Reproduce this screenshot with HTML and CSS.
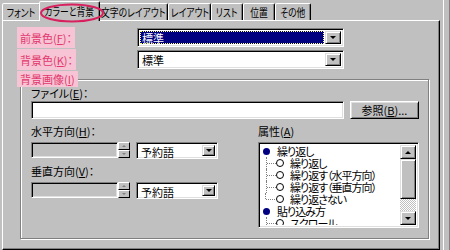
FILE: index.html
```html
<!DOCTYPE html>
<html>
<head>
<meta charset="utf-8">
<link rel="stylesheet" href="styles.css">
</head>
<body>
<div class="screen">
  <div class="dialog">
    <div class="tabs">
      <div class="tab t1"><span>フォント</span></div>
      <div class="tab sel t2"><span>カラーと背景</span></div>
      <div class="tab t3"><span>文字のレイアウト</span></div>
      <div class="tab t4"><span>レイアウト</span></div>
      <div class="tab t5"><span>リスト</span></div>
      <div class="tab t6"><span>位置</span></div>
      <div class="tab t7"><span>その他</span></div>
      <svg class="circle" width="70" height="22" viewBox="0 0 70 22"><ellipse cx="33" cy="11" rx="31" ry="8.5" fill="none" stroke="#d8205e" stroke-width="2"/></svg>
    </div>
    <div class="panel">
      <div class="crow">
        <div class="clbl"><span class="hl">前景色(<u>F</u>)：</span></div>
        <div class="combo wide"><span class="val focus">標準</span><span class="arrow"><i></i></span></div>
      </div>
      <div class="crow">
        <div class="clbl"><span class="hl">背景色(<u>K</u>)：</span></div>
        <div class="combo wide"><span class="val">標準</span><span class="arrow"><i></i></span></div>
      </div>
      <fieldset class="group">
        <legend class="hl">背景画像(<u>I</u>)</legend>
        <div class="lbl">ファイル(<u>E</u>)：</div>
        <div class="filerow">
          <div class="field file"></div>
          <div class="btn">参照(<u>B</u>)...</div>
        </div>
        <div class="lower">
          <div class="lcol">
            <div class="lbl">水平方向(<u>H</u>)：</div>
            <div class="spinrow">
              <div class="field spin"></div>
              <div class="spinbtn"><span class="up"><i></i></span><span class="dn"><i></i></span></div>
              <div class="combo small"><span class="val">予約語</span><span class="arrow"><i></i></span></div>
            </div>
            <div class="lbl second">垂直方向(<u>V</u>)：</div>
            <div class="spinrow">
              <div class="field spin"></div>
              <div class="spinbtn"><span class="up"><i></i></span><span class="dn"><i></i></span></div>
              <div class="combo small"><span class="val">予約語</span><span class="arrow"><i></i></span></div>
            </div>
          </div>
          <div class="rcol">
            <div class="lbl">属性(<u>A</u>)</div>
            <div class="listbox">
              <div class="items">
                <div class="item top"><span class="dot"></span>繰り返し</div>
                <div class="item child"><span class="tree"></span><span class="ring"></span>繰り返し</div>
                <div class="item child"><span class="tree"></span><span class="ring"></span>繰り返す（水平方向）</div>
                <div class="item child"><span class="tree"></span><span class="ring"></span>繰り返す（垂直方向）</div>
                <div class="item child last"><span class="tree"></span><span class="ring"></span>繰り返さない</div>
                <div class="item top"><span class="dot"></span>貼り込み方</div>
                <div class="item child"><span class="tree"></span><span class="ring"></span>スクロール</div>
              </div>
              <div class="sbar">
                <span class="sb-btn"><i class="tri-up"></i></span>
                <span class="thumb"></span>
                <span class="track"></span>
                <span class="sb-btn"><i class="tri-dn"></i></span>
              </div>
            </div>
          </div>
        </div>
      </fieldset>
    </div>
  </div>
  <div class="edge"></div>
</div>
</body>
</html>
```

FILE: styles.css
```css
* { box-sizing: border-box; }
html, body { margin: 0; padding: 0; }
body {
  background: #c0c0c0;
  font-family: "Noto Sans CJK JP", sans-serif;
  font-size: 11px;
  line-height: 12px;
  color: #000;
  font-feature-settings: "palt";
}
u { text-decoration: underline; text-underline-offset: 1px; }
.screen {
  width: 450px;
  height: 250px;
  overflow: hidden;
  display: flex;
  background: #c0c0c0;
}
.dialog {
  width: 440px;
  padding-left: 2px;
  display: flex;
  flex-direction: column;
}
.tabs {
  position: relative;
  height: 20px;
  display: flex;
  align-items: flex-end;
  z-index: 2;
}
.tab {
  height: 17px;
  border: 1px solid;
  border-bottom: none;
  border-color: #fff #000 transparent #fff;
  box-shadow: inset -1px 0 #808080;
  border-radius: 2px 2px 0 0;
  padding-top: 2px;
  display: flex;
  justify-content: center;
  white-space: nowrap;
  background: #c0c0c0;
}
.tab span {
  display: inline-block;
  transform: scaleX(0.8);
}
.t1 { width: 39px; }
.t2 { width: 61px; }
.t3 { width: 70px; }
.t4 { width: 43px; }
.t5 { width: 32px; }
.t6 { width: 32px; }
.t7 { width: 36px; }
.tab.sel {
  height: 20px;
  margin: 0 -2px -1px;
  padding-top: 3px;
  position: relative;
}
.circle {
  position: absolute;
  left: 37px;
  top: 2px;
}
.panel {
  flex: 1;
  border: 1px solid;
  border-color: #fff #000 #000 #fff;
  box-shadow: inset -1px -1px #808080;
  padding: 7px 0 0 14px;
}
.hl {
  background: #f6c4d4;
  color: #e2386e;
  padding: 3px 3px 2px;
}
.crow {
  display: flex;
  align-items: center;
  height: 19px;
}
.crow + .crow { margin-top: 3px; }
.clbl { width: 120px; }
.combo {
  display: flex;
  align-items: stretch;
  background: #fff;
  border: 1px solid;
  border-color: #808080 #fff #fff #808080;
  box-shadow: inset 1px 1px #000, inset -1px -1px #dfdfdf;
  padding: 2px;
}
.combo.wide { width: 207px; height: 19px; }
.combo.small { width: 82px; height: 17px; margin-left: 6px; }
.val {
  flex: 1;
  padding: 1px 2px 0;
  line-height: 12px;
}
.val.focus {
  background: #000080;
  color: #fff;
  outline: 1px dotted #ffff80;
  outline-offset: -1px;
  margin-right: 1px;
}
.arrow {
  width: 16px;
  border: 1px solid;
  border-color: #dfdfdf #000 #000 #dfdfdf;
  box-shadow: inset 1px 1px #fff, inset -1px -1px #808080;
  background: #c0c0c0;
  display: flex;
  align-items: center;
  justify-content: center;
}
.combo.small .arrow { width: 13px; }
.arrow i, .dn i, .tri-dn {
  width: 0; height: 0;
  border-left: 3px solid transparent;
  border-right: 3px solid transparent;
  border-top: 3px solid #000;
}
.group {
  margin: 2px 0 0 3px;
  width: 409px;
  height: 168px;
  border: 1px solid #808080;
  box-shadow: inset 1px 1px #fff, 1px 1px #fff;
  padding: 0 0 0 10px;
}
.group legend {
  margin-left: -14px;
  padding: 2px 3px;
  line-height: 12px;
}
.lbl { height: 13px; line-height: 12px; margin-top: 0; }
.filerow {
  display: flex;
  margin-top: 1px;
  height: 18px;
}
.field {
  border: 1px solid;
  border-color: #808080 #fff #fff #808080;
  box-shadow: inset 1px 1px #000, inset -1px -1px #dfdfdf;
}
.field.file { width: 313px; background: #fff; }
.btn {
  width: 69px;
  margin-left: 6px;
  border: 1px solid;
  border-color: #fff #000 #000 #fff;
  box-shadow: inset 1px 1px #dfdfdf, inset -1px -1px #808080;
  text-align: center;
  padding-top: 2px;
}
.lower { display: flex; margin-top: 6px; }
.lcol { width: 187px; }
.rcol { width: 161px; margin-left: 40px; }
.spinrow { display: flex; height: 16px; margin-top: 4px; }
.field.spin { width: 87px; background: #c0c0c0; }
.spinbtn { width: 12px; display: flex; flex-direction: column; }
.spinbtn span {
  flex: 1;
  border: 1px solid;
  border-color: #fff #000 #000 #fff;
  display: flex;
  align-items: center;
  justify-content: center;
}
.up i {
  width: 0; height: 0;
  border-left: 2px solid transparent;
  border-right: 2px solid transparent;
  border-bottom: 2px solid #808080;
}
.dn i {
  border-left-width: 2px;
  border-right-width: 2px;
  border-top: 2px solid #808080;
}
.lbl.second { margin-top: 7px; }
.rcol .listbox { margin-top: 4px; }
.listbox {
  height: 86px;
  background: #fff;
  border: 1px solid;
  border-color: #808080 #fff #fff #808080;
  box-shadow: inset 1px 1px #000, inset -1px -1px #dfdfdf;
  padding: 1px 2px 2px;
  display: flex;
}
.items { flex: 1; overflow: hidden; padding-top: 1px; }
.item {
  height: 12px;
  line-height: 12px;
  display: flex;
  align-items: center;
  white-space: nowrap;
  letter-spacing: -1px;
}
.dot {
  width: 7px; height: 7px;
  border-radius: 50%;
  background: #000080;
  margin: 0 7px 0 2px;
}
.tree {
  width: 10px;
  height: 12px;
  margin-left: 5px;
  border-left: 1px dotted #808080;
  position: relative;
}
.tree::after {
  content: "";
  position: absolute;
  left: 0; top: 6px;
  width: 9px;
  border-top: 1px dotted #808080;
}
.last .tree { height: 12px; border-left: none; }
.last .tree::before {
  content: "";
  position: absolute;
  left: -1px; top: 0;
  height: 6px;
  border-left: 1px dotted #808080;
}
.ring {
  width: 8px; height: 8px;
  border-radius: 50%;
  border: 1px solid #000;
  margin-right: 6px;
}
.sbar { width: 16px; display: flex; flex-direction: column; margin-top: 1px; }
.sb-btn, .thumb {
  border: 1px solid;
  border-color: #dfdfdf #000 #000 #dfdfdf;
  box-shadow: inset 1px 1px #fff, inset -1px -1px #808080;
  background: #c0c0c0;
  display: flex;
  align-items: center;
  justify-content: center;
}
.sb-btn { height: 14px; }
.thumb { height: 40px; }
.track {
  flex: 1;
  background: repeating-conic-gradient(#c0c0c0 0 25%, #fff 0 50%) 0 0 / 2px 2px;
}
.tri-up {
  width: 0; height: 0;
  border-left: 3px solid transparent;
  border-right: 3px solid transparent;
  border-bottom: 3px solid #000;
}
.edge {
  flex: 1;
  border-left: 3px solid #c0c0c0;
  display: flex;
}
.edge::before {
  content: "";
  width: 5px;
  border-left: 1px solid #fff;
  border-right: 1px solid #808080;
}
```
